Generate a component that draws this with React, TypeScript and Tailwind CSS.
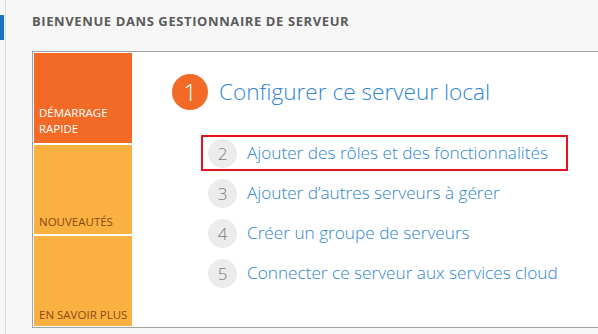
import React from "react";

const rows = [
  { n: "2", t: "Ajouter des rôles et des fonctionnalités", boxed: true },
  { n: "3", t: "Ajouter d’autres serveurs à gérer" },
  { n: "4", t: "Créer un groupe de serveurs" },
  { n: "5", t: "Connecter ce serveur aux services cloud" },
];

export default function App() {
  return (
    <div
      className="w-[598px] h-[334px] bg-[#f7f7f7] flex overflow-hidden"
      style={{ fontFamily: '"Open Sans", "Noto Sans", sans-serif' }}
    >
      <div className="w-[5px] shrink-0 pt-[15px]">
        <div className="w-[4px] h-[25px] bg-[#1a72c4]" />
      </div>
      <div className="w-[1px] shrink-0 bg-[#dcdcdc]" />
      <div className="flex-1 flex flex-col pl-[26px]">
        <div className="h-[51px] pt-[12px] text-[13px] font-bold text-[#5b5b5b] tracking-[0.6px] leading-[18px] whitespace-nowrap">
          BIENVENUE DANS GESTIONNAIRE DE SERVEUR
        </div>
        <div className="h-[277px] border-t border-l border-b border-[#a3a3a3] bg-white flex p-[1px]">
          <div className="w-[98px] flex flex-col gap-[2px] shrink-0">
            <div className="h-[90px] bg-[#f26a25] text-white text-[11.5px] leading-[16px] px-[5px] pb-[6px] flex flex-col justify-end whitespace-nowrap">
              <span>DÉMARRAGE</span>
              <span>RAPIDE</span>
            </div>
            <div className="h-[89px] bg-[#fbb142] text-[#8a4a12] text-[11.5px] leading-[16px] px-[5px] pb-[4px] flex flex-col justify-end whitespace-nowrap">
              <span>NOUVEAUTÉS</span>
            </div>
            <div className="flex-1 bg-[#fbb142] text-[#8a4a12] text-[11.5px] leading-[16px] px-[5px] pb-[3px] flex flex-col justify-end whitespace-nowrap">
              <span>EN SAVOIR PLUS</span>
            </div>
          </div>
          <div className="flex-1 flex flex-col pl-[40px] pt-[21px]">
            <div className="flex items-center gap-[11px] h-[36px]">
              <div className="w-[36px] h-[36px] rounded-full bg-[#f26a25] text-white text-[24px] font-light flex items-center justify-center leading-none">
                1
              </div>
              <div className="text-[22.6px] font-light text-[#2f86d4] leading-none">
                Configurer ce serveur local
              </div>
            </div>
            <div className="flex flex-col mt-[25px] pl-[36px]">
              {rows.map((r) => (
                <div
                  key={r.n}
                  className={
                    r.boxed
                      ? "h-[36px] w-[367px] border-2 border-[#e81123] flex items-center gap-[10px] pl-[5px] ml-[-7px]"
                      : "h-[36px] mt-[4px] flex items-center gap-[10px]"
                  }
                >
                  <div className="w-[29px] h-[29px] rounded-full bg-[#ececec] text-[#7a7a7a] text-[17px] font-light flex items-center justify-center leading-none">
                    {r.n}
                  </div>
                  <div className="text-[17.2px] font-light text-[#2f86d4] leading-none">{r.t}</div>
                </div>
              ))}
            </div>
          </div>
        </div>
      </div>
    </div>
  );
}
